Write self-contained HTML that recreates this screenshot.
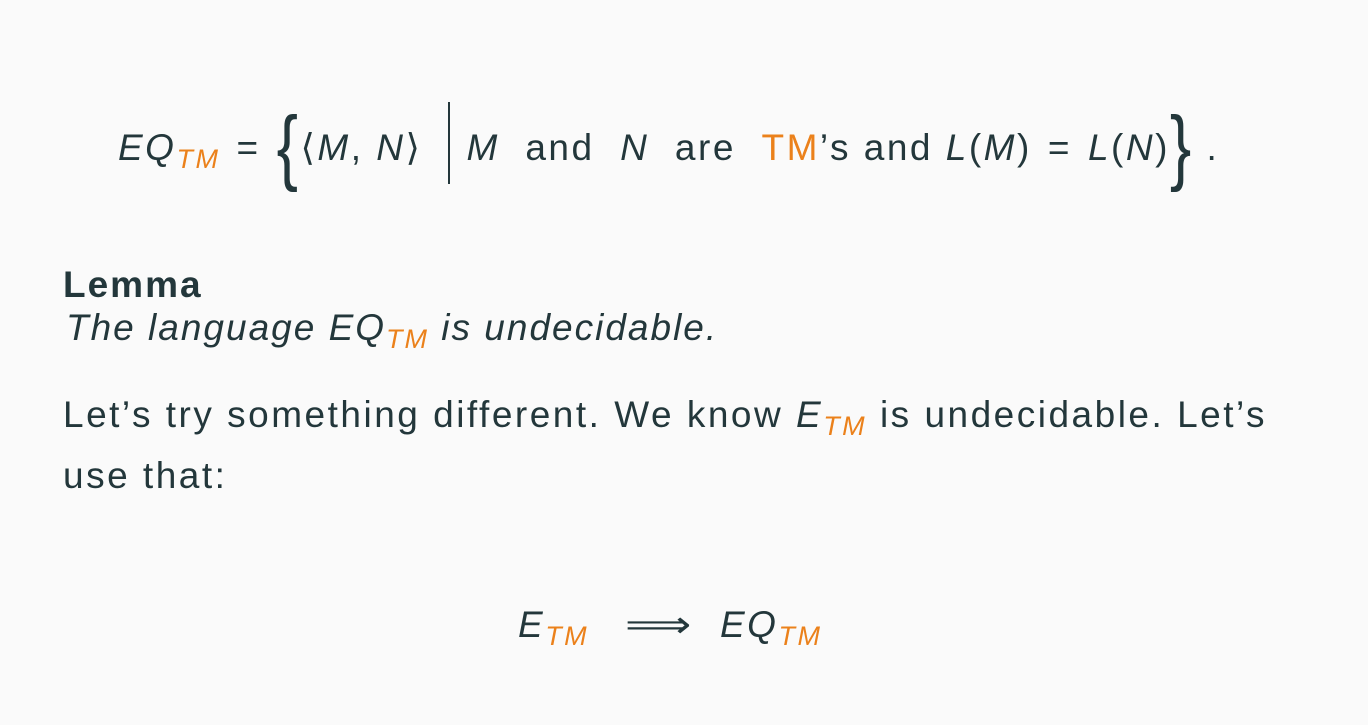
<!DOCTYPE html>
<html><head><meta charset="utf-8"><style>
body{margin:0;width:1368px;height:725px;background:#fafafa;color:#23373b;font-family:"Liberation Sans","DejaVu Sans",sans-serif;overflow:hidden;position:relative}
.l{position:absolute;white-space:nowrap;font-size:37px;line-height:1;letter-spacing:2.5px}
i{font-style:italic}
.o{color:#eb811b}
sub{font-size:27px;vertical-align:-8px;line-height:0}
.big{font-size:64px;font-weight:300;vertical-align:-8px;line-height:0;display:inline-block;transform:scaleY(1.3)}
.bar{display:inline-block;width:2px;height:82px;background:#23373b;vertical-align:-24px;margin:0 16px 0 26px}
.sp{margin:0 16px}
</style></head><body>
<div class="l" style="left:118px;top:102px"><i>EQ<sub class="o">TM</sub></i><span class="sp">=</span><span class="big">{</span>⟨<i>M</i>, <i>N</i>⟩<span class="bar"></span><i>M</i>&nbsp; and &nbsp;<i>N</i>&nbsp; are &nbsp;<span class="o">TM</span>’s and <i>L</i>(<i>M</i>)<span class="sp">=</span><i>L</i>(<i>N</i>)<span class="big">}</span>&nbsp;.</div>
<div class="l" style="left:63px;top:266px;font-weight:bold;letter-spacing:2px">Lemma</div>
<div class="l" style="left:66px;top:309px;letter-spacing:2px"><i>The language EQ<sub class="o">TM</sub> is undecidable.</i></div>
<div class="l" style="left:63px;top:396px">Let’s try something different. We know <i>E<sub class="o">TM</sub></i> is undecidable. Let’s</div>
<div class="l" style="left:63px;top:457px">use that:</div>
<div class="l" style="left:518px;top:606px"><i>E<sub class="o">TM</sub></i></div>
<div class="l" style="left:625px;top:606px;letter-spacing:0"><span style="display:inline-block;transform:scaleX(1.25);transform-origin:left">⟹</span></div>
<div class="l" style="left:720px;top:606px"><i>EQ<sub class="o">TM</sub></i></div>
</body></html>
